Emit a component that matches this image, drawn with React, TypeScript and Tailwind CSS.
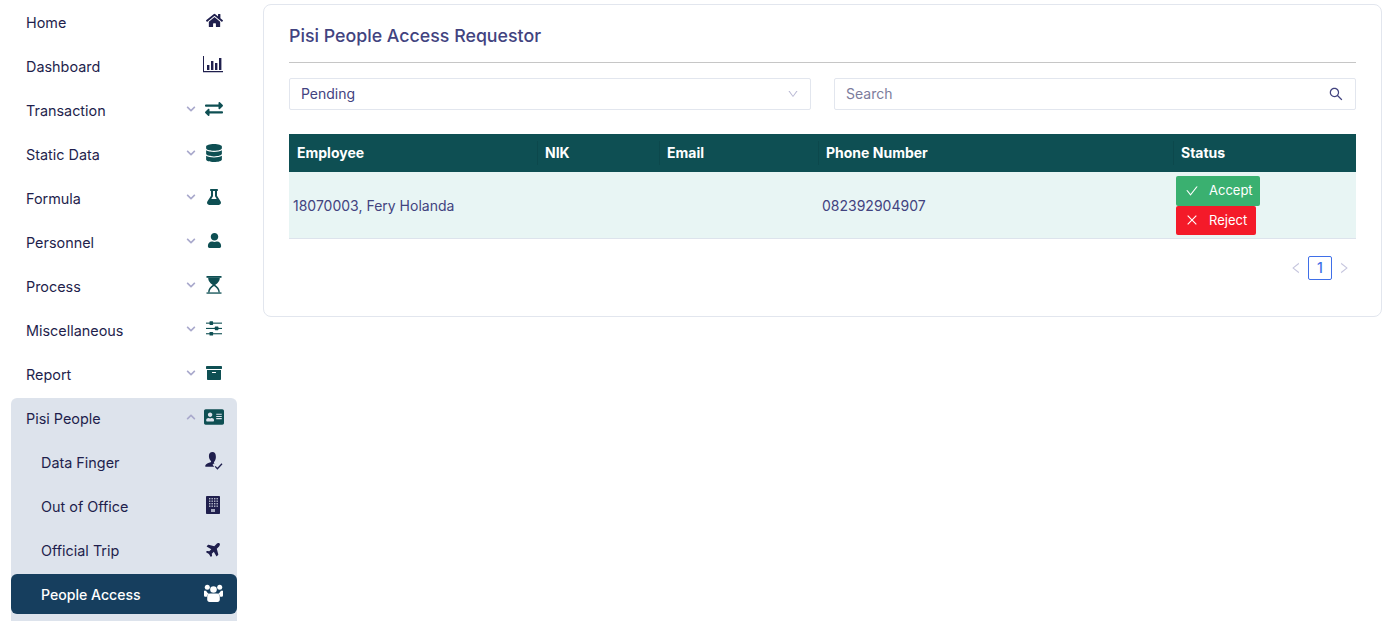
import React from "react";
import {
  FaHome,
  FaExchangeAlt,
  FaDatabase,
  FaFlask,
  FaUser,
  FaArchive,
  FaAddressCard,
  FaPlane,
  FaChevronDown,
  FaChevronUp,
} from "react-icons/fa";
import {
  AiOutlineCheck,
  AiOutlineClose,
  AiOutlineDown,
  AiOutlineLeft,
  AiOutlineRight,
  AiOutlineSearch,
} from "react-icons/ai";

const ChartIcon = () => (
  <svg width="20" height="17" viewBox="0 0 20 17" fill="currentColor" className="mr-[2px]">
    <path d="M0 0h1v15h19v1.2H0z" />
    <rect x="4" y="9" width="2.4" height="5" />
    <rect x="8" y="5" width="2.4" height="9" />
    <rect x="12" y="7" width="2.4" height="7" />
    <rect x="16" y="2" width="2.4" height="12" />
  </svg>
);

const HourglassIcon = () => (
  <svg width="16" height="18" viewBox="0 0 16 18" fill="currentColor">
    <rect x="0.5" y="0" width="15" height="1.8" />
    <rect x="0.5" y="16.4" width="15" height="1.3" />
    <path d="M2.2 1.8h11.6c0 3.6-2.4 5.6-4.6 7.2 2.2 1.6 4.6 3.6 4.6 7.4h-1.3c0-3-2.2-4.8-4.5-6.5-2.3 1.7-4.500 3.500-4.500 6.500H2.200c0-3.800 2.400-5.800 4.600-7.400C4.600 7.400 2.200 5.400 2.200 1.800z" />
  </svg>
);

const SlidersIcon = () => (
  <svg width="16" height="15" viewBox="0 0 16 15" fill="currentColor">
    <rect x="0" y="1.6" width="16" height="1.1" />
    <rect x="0" y="6.9" width="16" height="1.1" />
    <rect x="0" y="12.2" width="16" height="1.1" />
    <rect x="3.5" y="0.3" width="3.6" height="3.6" rx="0.6" />
    <rect x="8.800" y="5.6" width="3.6" height="3.6" rx="0.6" />
    <rect x="3.5" y="10.9" width="3.6" height="3.6" rx="0.6" />
  </svg>
);

const PersonCheckIcon = () => (
  <svg width="18" height="18" viewBox="0 0 18 18" className="mr-[1px]">
    <path
      fill="currentColor"
      d="M7.500 0C5.300 0 3.900 1.700 3.900 3.900c0 2.100.9 4 2 5 .3.300.3 1-.2 1.300C3.500 11 .6 11.700.2 13.700c-.1.600.3 1 .8 1h8.300l-1.800-2 1.400-1.300 1 1c-.6-.5-1.200-1.700-.9-2.300.9-1 1.900-3 1.900-5.200C10.900 1.700 9.700 0 7.500 0z"
    />
    <path d="M10.200 14.400l2.200 2.300 4.600-5" fill="none" stroke="currentColor" strokeWidth="1.3" />
  </svg>
);

const OfficeIcon = () => (
  <svg width="14" height="18" viewBox="0 0 14 18" className="mr-[3px]">
    <rect width="14" height="18" rx="0.8" fill="currentColor" />
    {[3, 5.5, 8, 10.5].map((x) =>
      [2, 4.5, 7, 9.5].map((y) => (
        <rect key={`${x}-${y}`} x={x} y={y} width="1.4" height="1.4" fill="#dde3ec" opacity="0.8" />
      ))
    )}
    <rect x="5" y="13" width="4" height="3" fill="#dde3ec" opacity="0.7" />
  </svg>
);

const UsersIcon = () => (
  <svg width="19" height="18" viewBox="0 0 19 18" fill="currentColor" className="mr-[2px]">
    <circle cx="3.3" cy="3.3" r="2.5" />
    <circle cx="15.7" cy="3.3" r="2.5" />
    <circle cx="9.5" cy="5.500" r="3.3" />
    <path d="M0 6.700h2.200c.5 1.500 1.500 2.400 2.600 2.900-1.100.8-1.800 1.900-2 3.200H1.200C.4 12.800 0 12.200 0 11.300z" />
    <path d="M19 6.700h-2.200c-.5 1.500-1.500 2.400-2.600 2.900 1.100.8 1.800 1.900 2 3.200h1.600c.8 0 1.200-.6 1.200-1.500z" />
    <path d="M5.800 9.500h7.400c1.700 0 2.600 1.500 2.600 3.500v2.600c0 1.400-.9 2.400-2.300 2.400H5.500c-1.400 0-2.300-1-2.300-2.400V13c0-2 .9-3.500 2.600-3.500z" />
  </svg>
);

const menu = [
  { label: "Home", icon: <FaHome className="text-[17px]" />, dark: true },
  { label: "Dashboard", icon: <ChartIcon />, dark: true },
  { label: "Transaction", icon: <FaExchangeAlt className="text-[18px]" />, arrow: true },
  { label: "Static Data", icon: <FaDatabase className="text-[18px]" />, arrow: true },
  { label: "Formula", icon: <FaFlask className="text-[16px]" />, arrow: true },
  { label: "Personnel", icon: <FaUser className="text-[15px]" />, arrow: true },
  { label: "Process", icon: <HourglassIcon />, arrow: true },
  { label: "Miscellaneous", icon: <SlidersIcon />, arrow: true },
  { label: "Report", icon: <FaArchive className="text-[16px]" />, arrow: true },
];

const subMenu = [
  { label: "Data Finger", icon: <PersonCheckIcon /> },
  { label: "Out of Office", icon: <OfficeIcon /> },
  { label: "Official Trip", icon: <FaPlane className="-rotate-45 text-[16px]" /> },
];

const columns = [
  { label: "Employee", width: "w-[248px]" },
  { label: "NIK", width: "w-[122px]" },
  { label: "Email", width: "w-[159px]" },
  { label: "Phone Number", width: "w-[355px]" },
  { label: "Status", width: "w-[183px]" },
];

const App = () => {
  return (
    <div className="flex h-screen overflow-hidden bg-white font-['Inter',sans-serif] text-[14px] text-[#1f1f4d]">
      <aside className="w-[248px] shrink-0 px-[11px] pt-[2px] text-[14.4px]">
        {menu.map((item) => (
          <div key={item.label} className="mb-[4px] flex h-[40px] items-center pl-[15px] pr-[12px]">
            <span className="flex-1 pt-[2px]">{item.label}</span>
            {item.arrow && <FaChevronDown className="mr-[7px] mt-[-3px] text-[10px] text-[#a9a9cc]" />}
            <span
              className={`mt-[-3px] flex w-[22px] justify-center ${
                item.dark ? "text-[#1f1f4d]" : "text-[#0e4f53]"
              }`}
            >
              {item.icon}
            </span>
          </div>
        ))}
        <div className="rounded-t-[6px] bg-[#dde3ec]">
          <div className="mb-[4px] flex h-[40px] items-center pl-[15px] pr-[12px]">
            <span className="flex-1 pt-[2px]">Pisi People</span>
            <FaChevronUp className="mr-[7px] mt-[-3px] text-[10px] text-[#a9a9cc]" />
            <span className="mt-[-3px] flex w-[22px] justify-center text-[20px] text-[#0e4f53]">
              <FaAddressCard />
            </span>
          </div>
          {subMenu.map((item) => (
            <div key={item.label} className="mb-[4px] flex h-[40px] items-center pl-[30px] pr-[12px]">
              <span className="flex-1 pt-[2px]">{item.label}</span>
              <span className="mt-[-3px] flex w-[22px] justify-center text-[#1f1f4d]">{item.icon}</span>
            </div>
          ))}
          <div className="flex h-[40px] items-center rounded-[6px] bg-[#163e5e] pl-[30px] pr-[12px] text-[14.1px] font-medium text-white">
            <span className="flex-1 pt-[2px]">People Access</span>
            <span className="mt-[-3px] flex w-[22px] justify-center">
              <UsersIcon />
            </span>
          </div>
          <div className="h-[20px]" />
        </div>
      </aside>

      <main className="min-w-0 flex-1 pl-[15px] pr-[6px] pt-[4px]">
        <div className="h-[313px] rounded-lg border border-[#e2e6ee] px-[25px] pt-[17px]">
          <h1 className="border-b border-[#c6c6c6] pb-[13px] text-[17.8px] font-medium leading-[27px] text-[#42437f]">
            Pisi People Access Requestor
          </h1>

          <div className="mt-[15px] flex gap-[23px] text-[#42437f]">
            <div className="flex h-[32px] flex-1 items-center rounded-[2px] border border-[#e2e6ee] px-[11px]">
              <span className="flex-1 pb-[1px]">Pending</span>
              <AiOutlineDown className="text-[12px] text-[#b9b9d4]" />
            </div>
            <div className="flex h-[32px] flex-1 items-center rounded-[2px] border border-[#e2e6ee] px-[11px]">
              <span className="flex-1 pb-[1px] text-[#7c7c9c]">Search</span>
              <AiOutlineSearch className="text-[16px] text-[#42437f]" />
            </div>
          </div>

          <table className="mt-[24px] w-full table-fixed border-collapse">
            <thead>
              <tr className="h-[38px] bg-[#0e4f53] text-white">
                {columns.map((col, i) => (
                  <th key={col.label} className={`relative ${col.width} px-[8px] pb-[1px] text-left font-bold`}>
                    {i > 0 && <span className="absolute left-0 top-[7px] h-[24px] w-px bg-[#0c484c]" />}
                    {col.label}
                  </th>
                ))}
              </tr>
            </thead>
            <tbody>
              <tr className="h-[66px] border-b border-[#dde3ec] bg-[#e8f5f4] text-[#42437f]">
                <td className="px-[4px] pt-[2px]">18070003, Fery Holanda</td>
                <td className="px-[4px]"></td>
                <td className="px-[4px]"></td>
                <td className="px-[4px] pt-[2px]">082392904907</td>
                <td className="px-[3px] pt-[1px]">
                  <button className="flex h-[30px] items-center rounded-[2px] bg-[#3ab070] pl-[9px] pr-[7px] text-[13px] text-white">
                    <AiOutlineCheck className="mr-[10px] text-[14px]" />
                    Accept
                  </button>
                  <button className="flex h-[29px] items-center rounded-[2px] bg-[#f41a29] pl-[9px] pr-[9px] text-[13px] text-white">
                    <AiOutlineClose className="mr-[10px] text-[14px]" />
                    Reject
                  </button>
                </td>
              </tr>
            </tbody>
          </table>

          <div className="mt-[17px] flex items-center justify-end gap-[5px] pr-[5px]">
            <AiOutlineLeft className="text-[14px] text-[#c6c6de]" />
            <span className="flex h-[24px] w-[24px] items-center justify-center rounded-[2px] border border-[#3f6fe8] font-medium text-[#3f6fe8]">
              1
            </span>
            <AiOutlineRight className="text-[14px] text-[#c6c6de]" />
          </div>
        </div>
      </main>
    </div>
  );
};

export default App;
